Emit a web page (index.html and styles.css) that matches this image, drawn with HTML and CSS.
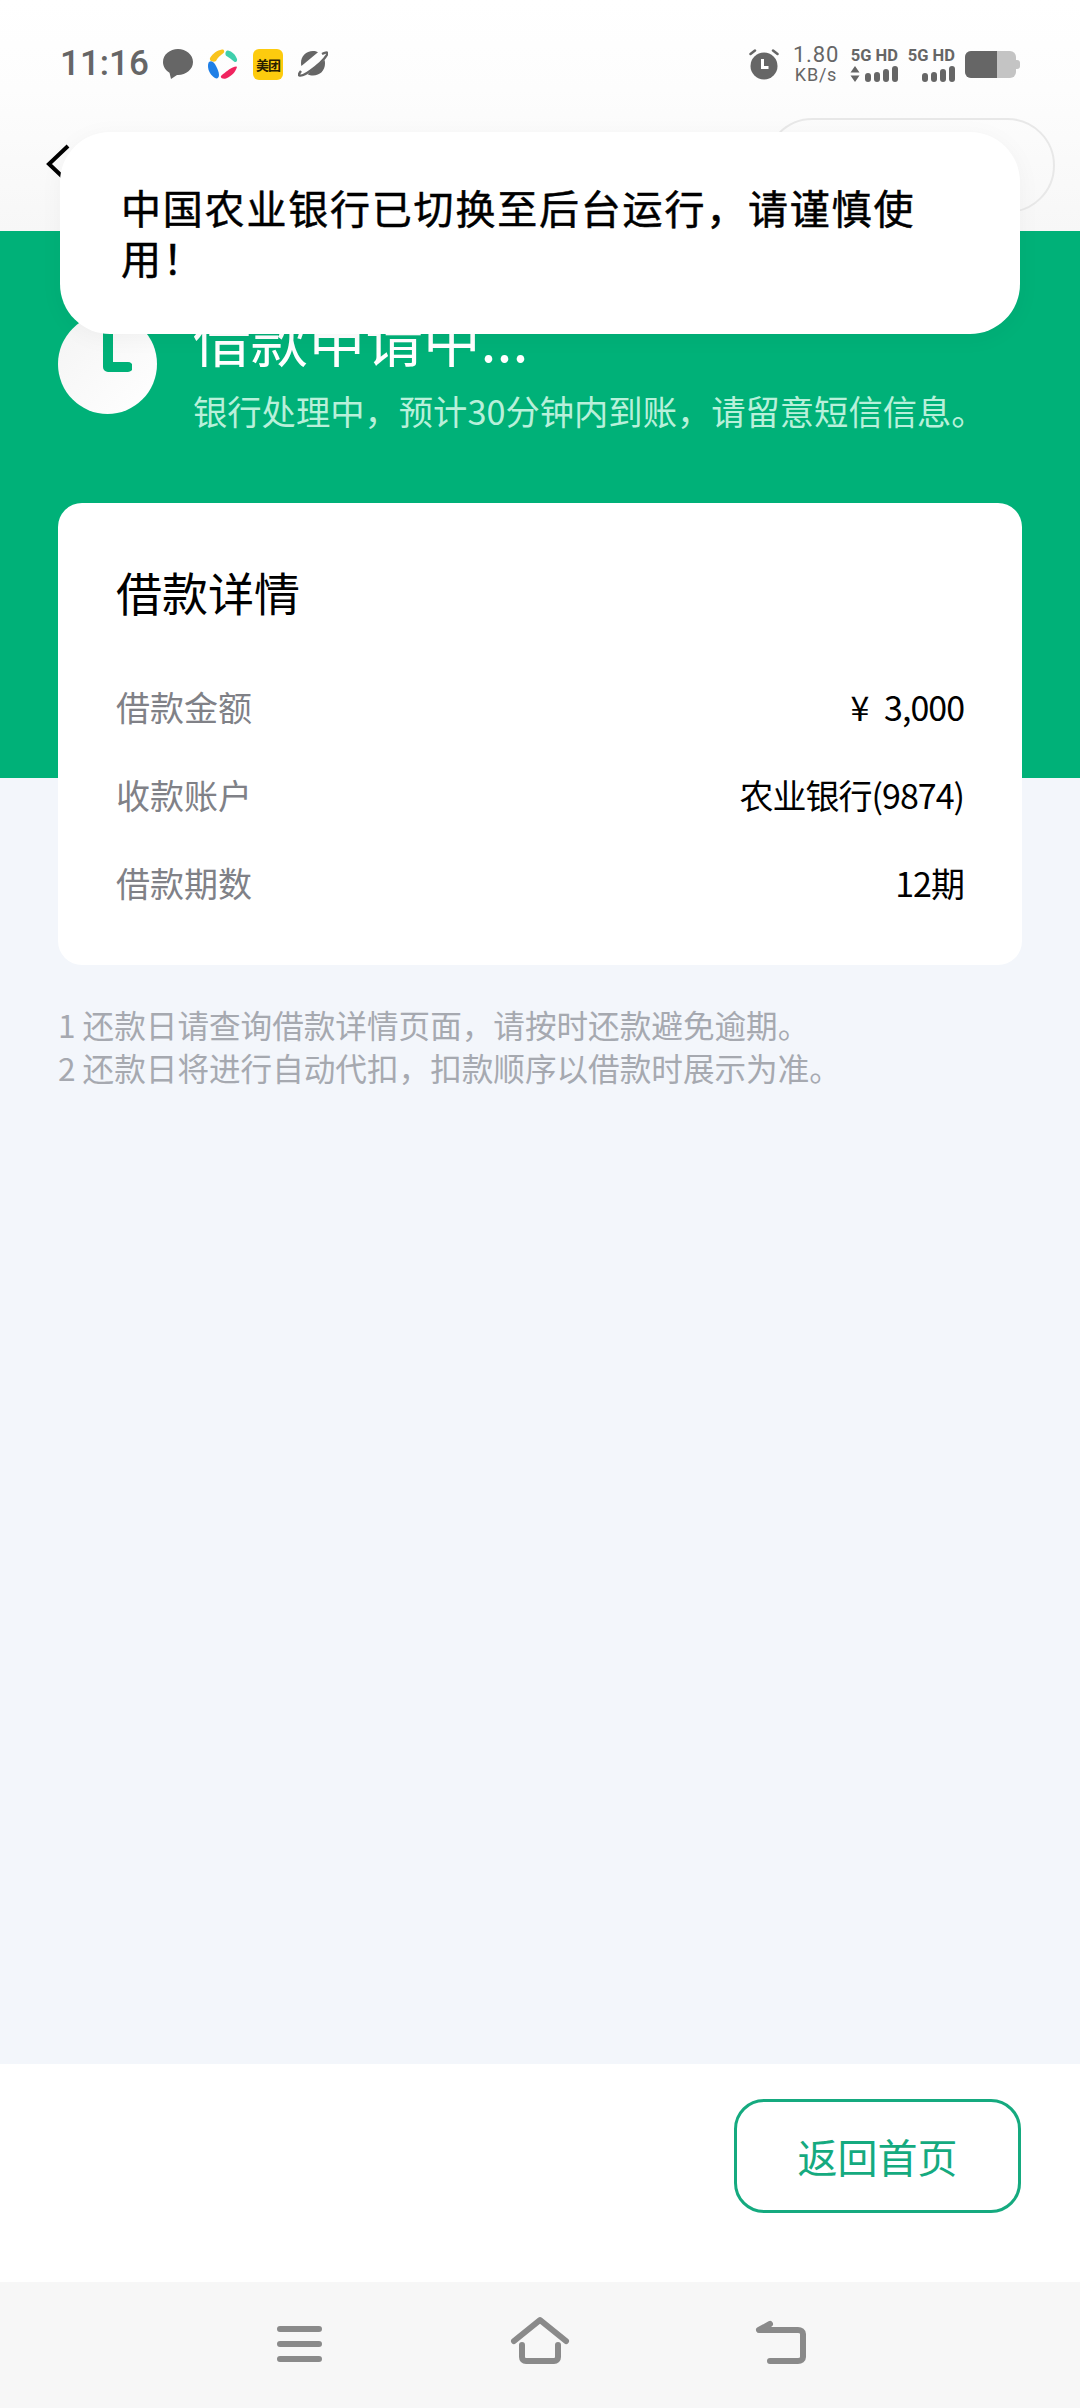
FILE: index.html
```html
<!DOCTYPE html>
<html lang="zh-CN">
<head>
<meta charset="utf-8">
<title>借款申请中</title>
<link rel="stylesheet" href="styles.css">
</head>
<body>
<div class="screen">
  <header class="top">
    <div class="status">
      <div class="status-left">
        <span class="time">11:16</span>
        <svg class="si" viewBox="0 0 30 30"><path fill="#666" d="M15 0C7 0 0 5.500 0 13c0 4.500 2.600 8.400 6.500 10.800L8 30l6-4.100h1c8 0 15-5.500 15-12.900S23 0 15 0z"/></svg>
        <svg class="si" viewBox="0 0 30 30"><path fill="#f9c31c" d="M2 9C5 4 9 1.500 14 0.500c2-.3 3 2 1.500 3.500C12 6.500 9.500 9 8 12c-2 1.500-7 .5-6-3z"/><path fill="#3fcfac" d="M20 1.500c4 1 7.500 4 9 8.500.6 2-.8 4-3 2.500-2.500-2-5-4-7.500-5.500-2-1.500-1-6 1.500-5.500z"/><path fill="#f0245f" d="M29 18c-1.500 5-5 9-11 11.500-3 .8-6-.5-5-2.500 1-1.500 5-4 8-6.500 2.500-2 8-4 8-2.500z"/><path fill="#1f7fe6" d="M1 13c3-2 5.500 1 7 4 1.500 3 3 6 3 9 0 3-2 4-4 3-4-2.500-7-7-7-12 0-2 .5-3.500 1-4z"/></svg>
        <div class="mt">美团</div>
        <svg class="si" viewBox="0 0 30 30"><path fill="#666" d="M15 2C8 2 3 7 3 14c0 1 .1 2 .4 3L20 3.200C18.500 2.400 17 2 15 2zM26.600 11 9.500 25.200C11 26 13 26.500 15 26.500c7 0 12-5 12-12 0-1.200-.1-2.400-.4-3.500z"/><path fill="none" stroke="#666" stroke-width="2.400" d="M24 5c3-1.500 5-1.800 5.400-1 .7 1.500-5 8.500-12 14S3.500 27.500 1.500 26.500C.5 26 1 24.500 3 22"/></svg>
      </div>
      <div class="status-right">
        <svg class="alarm" viewBox="0 0 30 32"><circle cx="15" cy="18" r="13.500" fill="#666"/><path stroke="#666" stroke-width="2.500" stroke-linecap="round" fill="none" d="M1.500 6 6 2.500M28.500 6 24 2.500"/><path stroke="#fff" stroke-width="3" fill="none" d="M13.500 11v8.500h6"/></svg>
        <div class="speed"><span class="speed-n">1.80</span><span class="speed-u">KB/s</span></div>
        <div class="sim">
          <span class="sim-t">5G HD</span>
          <div class="bars">
            <svg class="updown" viewBox="0 0 10 16"><path fill="#666" d="M5 0l4.500 6.500h-9zM5 16l-4.500-6.500h9z"/></svg>
            <i class="b b1"></i><i class="b b2"></i><i class="b b3"></i><i class="b b4"></i>
          </div>
        </div>
        <div class="sim">
          <span class="sim-t">5G HD</span>
          <div class="bars">
            <i class="b b1"></i><i class="b b2"></i><i class="b b3"></i><i class="b b4"></i>
          </div>
        </div>
        <div class="battery"><div class="battery-fill"></div><div class="battery-tip"></div></div>
      </div>
    </div>
    <div class="navrow">
      <svg class="back" viewBox="0 0 26 40"><path d="M23 2 4 20l19 18" fill="none" stroke="#000" stroke-width="4"/></svg>
      <div class="pill"></div>
    </div>
  </header>

  <main class="main">
    <section class="state">
      <div class="clock"><svg class="clock-l" viewBox="0 0 30 50"><path d="M6 3v37h20" fill="none" stroke="#00b178" stroke-width="10" stroke-linecap="round" stroke-linejoin="round"/></svg></div>
      <div class="state-text">
        <h1 class="state-title">借款申请中...</h1>
        <p class="state-sub">银行处理中，预计30分钟内到账，请留意短信信息。</p>
      </div>
    </section>

    <section class="card">
      <h2 class="card-title">借款详情</h2>
      <div class="row"><span class="label">借款金额</span><span class="value">¥ 3,000</span></div>
      <div class="row"><span class="label">收款账户</span><span class="value">农业银行(9874)</span></div>
      <div class="row"><span class="label">借款期数</span><span class="value">12期</span></div>
    </section>

    <div class="notes">
      <p>1 还款日请查询借款详情页面，请按时还款避免逾期。</p>
      <p>2 还款日将进行自动代扣，扣款顺序以借款时展示为准。</p>
    </div>
  </main>

  <footer class="footer"><button class="home-btn">返回首页</button></footer>

  <nav class="sysnav">
    <svg class="nav-i" viewBox="0 0 60 50"><path d="M10 13h39M10 28h39M10 43h39" stroke="#8a8a8a" stroke-width="6" stroke-linecap="round" fill="none"/></svg>
    <svg class="nav-i" viewBox="0 0 60 50"><path d="M4 25 30 4l26 21" stroke="#8a8a8a" stroke-width="6" stroke-linecap="round" stroke-linejoin="round" fill="none"/><path d="M12 29v12c0 2.500 1.500 4 4 4h28c2.500 0 4-1.500 4-4V29" stroke="#8a8a8a" stroke-width="6" stroke-linecap="round" fill="none"/></svg>
    <svg class="nav-i" viewBox="0 0 60 50"><path d="M20 8 9 14h39c3 0 5 1.500 5 4v23c0 2.500-2 4-5 4H20" stroke="#8a8a8a" stroke-width="6" stroke-linecap="round" stroke-linejoin="round" fill="none"/></svg>
  </nav>

  <div class="toast">中国农业银行已切换至后台运行，请谨慎使用！</div>
</div>
</body>
</html>
```

FILE: styles.css
```css
* { box-sizing: border-box; }
html, body { margin: 0; padding: 0; }
body { font-family: "Noto Sans CJK SC", "Noto Sans", sans-serif; }
h1, h2, p { margin: 0; font-weight: 400; }

.screen {
  position: relative;
  width: 1080px;
  height: 2408px;
  display: flex;
  flex-direction: column;
  overflow: hidden;
  background: #f3f6fb;
}

.top {
  height: 231px;
  flex: none;
  background: linear-gradient(#ffffff 0, #fdfdfd 90px, #f7f7f7 231px);
  display: flex;
  flex-direction: column;
}
.status {
  height: 118px;
  flex: none;
  padding: 45px 64px 0 60px;
  display: flex;
  justify-content: space-between;
  align-items: flex-start;
}
.status-left { display: flex; align-items: center; gap: 15px; height: 38px; }
.time {
  font-family: Roboto, sans-serif;
  font-size: 35px;
  font-weight: 500;
  color: #666;
  line-height: 38px;
  width: 88px;
}
.si { width: 30px; height: 30px; display: block; }
.mt {
  width: 30px;
  height: 31px;
  border-radius: 6px;
  background: #fdcb0e;
  color: #2a2000;
  font-size: 13px;
  font-weight: 700;
  line-height: 31px;
  letter-spacing: -1px;
  text-align: center;
  white-space: nowrap;
}
.status-right { display: flex; align-items: center; height: 38px; }
.alarm { width: 30px; height: 32px; display: block; margin-right: 13px; }
.speed {
  width: 48px;
  display: flex;
  flex-direction: column;
  align-items: center;
  font-family: Roboto, sans-serif;
  color: #666;
  margin-right: 10px;
}
.speed-n { font-size: 22px; line-height: 22px; letter-spacing: .8px; }
.speed-u { font-size: 18px; line-height: 18px; letter-spacing: .8px; }
.sim { width: 48px; margin-right: 9px; display: flex; flex-direction: column; align-items: flex-end; }
.sim-t {
  font-family: Roboto, sans-serif;
  font-weight: 700;
  font-size: 16.500px;
  line-height: 17px;
  color: #666;
  white-space: nowrap;
}
.bars { display: flex; align-items: flex-end; justify-content: flex-end; gap: 3px; height: 18px; width: 100%; }
.updown { width: 10px; height: 16px; display: block; margin-right: auto; }
.b { width: 6px; background: #666; border-radius: 3px; display: block; }
.b1 { height: 9px; } .b2 { height: 10px; } .b3 { height: 13px; } .b4 { height: 16px; }
.battery {
  position: relative;
  width: 51px;
  height: 27px;
  margin-left: 1px;
  border-radius: 6px;
  background: #c4c4c4;
  overflow: visible;
}
.battery-fill { width: 32px; height: 27px; background: #666; border-radius: 6px 0 0 6px; }
.battery-tip { position: absolute; right: -4px; top: 9px; width: 4px; height: 9px; background: #c4c4c4; border-radius: 0 3px 3px 0; }

.navrow {
  flex: 1;
  padding: 0 25px 19px 45px;
  display: flex;
  justify-content: space-between;
  align-items: flex-start;
}
.back { width: 26px; height: 40px; margin-top: 26px; display: block; }
.pill {
  width: 290px;
  height: 95px;
  border: 2px solid #e8e8e8;
  border-radius: 48px;
}

.main {
  flex: 1;
  padding: 0 58px;
  display: flex;
  flex-direction: column;
  background: linear-gradient(#00b178 547px, #f3f6fb 547px);
}
.state { display: flex; gap: 36px; height: 272px; padding-top: 83px; }
.clock {
  width: 99px;
  height: 100px;
  flex: none;
  border-radius: 50%;
  background: linear-gradient(135deg, #f4f4f4, #ffffff);
  display: flex;
  align-items: center;
  justify-content: center;
}
.clock-l { width: 30px; height: 50px; margin-left: 19px; margin-top: -24px; display: block; }
.state-text { display: flex; flex-direction: column; }
.state-title { font-size: 57.500px; line-height: 70px; color: #fff; margin-top: -12px; white-space: nowrap; }
.state-sub { font-size: 34.300px; line-height: 48px; color: #b8f0da; margin-top: 14px; white-space: nowrap; }

.card {
  width: 964px;
  height: 462px;
  background: #fff;
  border-radius: 24px;
  padding: 58px 58px 0;
}
.card-title { font-size: 46px; line-height: 60px; color: #000; margin-bottom: 41px; }
.row {
  display: flex;
  justify-content: space-between;
  align-items: center;
  height: 88px;
  font-size: 34px;
}
.label { color: #808187; }
.value { color: #000; letter-spacing: -1px; word-spacing: 9px; }

.notes {
  margin-top: 38px;
  font-size: 31.600px;
  line-height: 43px;
  color: #a6a9b0;
}

.footer {
  height: 218px;
  flex: none;
  background: #fff;
  padding: 35px 59px 0 0;
  display: flex;
  justify-content: flex-end;
  align-items: flex-start;
}
.home-btn {
  width: 287px;
  height: 114px;
  border: 3px solid #15aa7f;
  border-radius: 30px;
  background: #fff;
  color: #15aa7f;
  font: 400 40px "Noto Sans CJK SC", sans-serif;
  padding: 0;
}

.sysnav {
  height: 126px;
  flex: none;
  background: #f7f7f7;
  position: relative;
  display: grid;
  grid-template-columns: 60px 60px 60px;
  column-gap: 180px;
  justify-content: center;
  padding-top: 34px;
}
.nav-i { width: 60px; height: 50px; display: block; }

.toast {
  position: absolute;
  left: 60px;
  top: 132px;
  width: 960px;
  height: 202px;
  padding: 54px 61px 0;
  background: #fff;
  border-radius: 50px;
  box-shadow: 0 4px 24px rgba(0, 0, 0, .04);
  color: #000;
  font-family: Roboto, "Noto Sans CJK SC", sans-serif;
  font-size: 40px;
  font-weight: 400;
  -webkit-text-stroke: .5px #000;
  line-height: 50px;
  letter-spacing: 1.800px;
}
```
